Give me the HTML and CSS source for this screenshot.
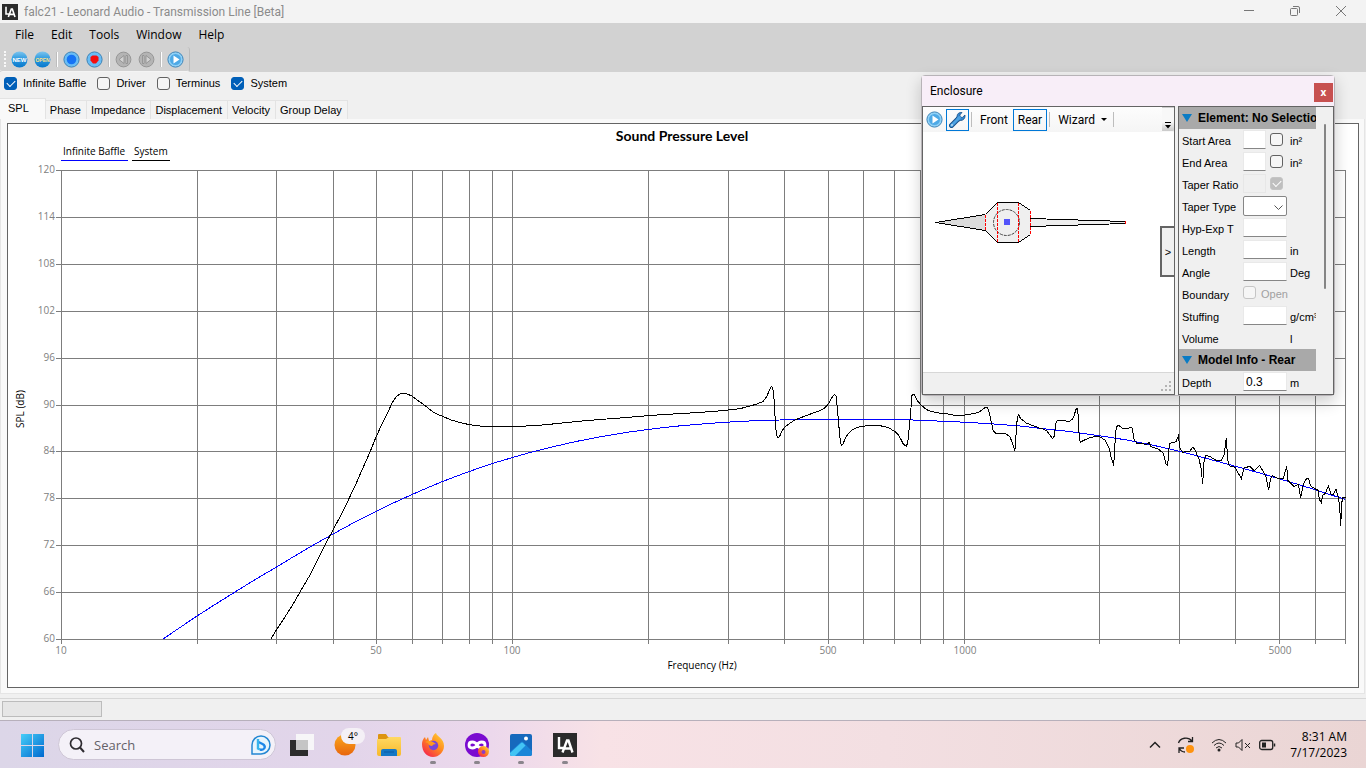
FILE: index.html
```html
<!DOCTYPE html>
<html lang="en">
<head>
    <meta charset="UTF-8">
    <meta name="viewport" content="width=device-width, initial-scale=1.0">
    <title>falc21 - Leonard Audio - Transmission Line [Beta]</title>
    <link rel="stylesheet" href="styles.css">
</head>
<body>
    <svg class="defs" width="0" height="0">
        <defs>
            <linearGradient id="gBall" x1="0" y1="0" x2="0" y2="1"><stop offset="0" stop-color="#7cc4ee"/><stop offset="0.45" stop-color="#2f9be0"/><stop offset="1" stop-color="#0878cc"/></linearGradient>
            <linearGradient id="gWin" x1="0" y1="0" x2="1" y2="1"><stop offset="0" stop-color="#45cdf8"/><stop offset="1" stop-color="#0069cf"/></linearGradient>
            <linearGradient id="gSun" x1="0" y1="0" x2="0" y2="1"><stop offset="0" stop-color="#fba81c"/><stop offset="1" stop-color="#e8650c"/></linearGradient>
            <linearGradient id="gFolder" x1="0" y1="0" x2="0" y2="1"><stop offset="0" stop-color="#ffd963"/><stop offset="1" stop-color="#f7b92c"/></linearGradient>
            <linearGradient id="gFox" x1="1" y1="0" x2="0.2" y2="1"><stop offset="0" stop-color="#ffdd3c"/><stop offset="0.5" stop-color="#ff8a1e"/><stop offset="1" stop-color="#f5224f"/></linearGradient>
            <symbol id="la" viewBox="0 0 24 24">
                <rect width="24" height="24" fill="#2b2b2b"/>
                <path d="M6 4v11h5M9.500 19.500L14 7.500h1.500L19.500 19.500M11.500 15.500h6" fill="none" stroke="#fff" stroke-width="2.400"/>
            </symbol>
            <symbol id="play" viewBox="0 0 17 17">
                <circle cx="8.500" cy="8.500" r="7.600" fill="#8fd0f6" stroke="#4186b8"/>
                <circle cx="8.500" cy="8.500" r="5.500" fill="#4ea9e6"/>
                <path d="M6.500 4.500v8l6-4z" fill="#fff"/>
            </symbol>
        </defs>
    </svg>

    <header class="titlebar">
        <svg class="app-icon" width="16" height="16"><use href="#la"/></svg>
        <h1>falc21 - Leonard Audio - Transmission Line [Beta]</h1>
        <div class="window-buttons">
            <button aria-label="Minimize"><svg width="12" height="12"><path d="M1 4.500h10"/></svg></button>
            <button aria-label="Restore"><svg width="12" height="12"><rect x="1.500" y="2.500" width="7" height="7" rx="1"/><path d="M4 0.500h5q1.500 0 1.500 1.500v5"/></svg></button>
            <button aria-label="Close"><svg width="12" height="12"><path d="M1 0l10 10M11 0L1 10"/></svg></button>
        </div>
    </header>

    <nav class="menu">
        <button>File</button>
        <button>Edit</button>
        <button>Tools</button>
        <button>Window</button>
        <button>Help</button>
    </nav>

    <div class="toolbar-row">
        <div class="toolbar">
            <span class="grip"></span>
            <button aria-label="New"><svg width="17" height="17"><circle cx="8.500" cy="8.500" r="8" fill="url(#gBall)"/><text x="8.500" y="11" class="ball-text">NEW</text></svg></button>
            <button aria-label="Open"><svg width="17" height="17"><circle cx="8.500" cy="8.500" r="8" fill="url(#gBall)"/><text x="8.500" y="11" class="ball-text gold">OPEN</text></svg></button>
            <span class="sep"></span>
            <button aria-label="Driver"><svg width="17" height="17"><circle cx="8.500" cy="8.500" r="7.600" fill="#69bdf5" stroke="#3f83b5"/><circle cx="8.500" cy="8.500" r="4.800" fill="#1673f5"/></svg></button>
            <button aria-label="Record"><svg width="17" height="17"><circle cx="8.500" cy="8.500" r="7.600" fill="#69bdf5" stroke="#3f83b5"/><path d="M4.500 6l2-1.500h4l2 1.500v3.500l-2.500 3h-3l-2.500-3z" fill="#f50d0d"/></svg></button>
            <span class="sep"></span>
            <button aria-label="Step back"><svg width="17" height="17"><circle cx="8.500" cy="8.500" r="7.400" fill="#b4b4b4" stroke="#979797"/><path d="M9 4.500v8l-5-4zM11 4.500h1.500v8H11z" fill="#d2d2d2" stroke="#8b8b8b" stroke-width="0.800"/></svg></button>
            <button aria-label="Step forward"><svg width="17" height="17"><circle cx="8.500" cy="8.500" r="7.400" fill="#b4b4b4" stroke="#979797"/><path d="M8 4.500v8l5-4zM4.500 4.500H6v8H4.500z" fill="#d2d2d2" stroke="#8b8b8b" stroke-width="0.800"/></svg></button>
            <span class="sep"></span>
            <button aria-label="Run"><svg width="17" height="17"><use href="#play"/></svg></button>
        </div>
    </div>

    <div class="checks">
        <label><input type="checkbox" checked>Infinite Baffle</label>
        <label><input type="checkbox">Driver</label>
        <label><input type="checkbox">Terminus</label>
        <label><input type="checkbox" checked>System</label>
    </div>

    <div class="tabs">
        <button class="active">SPL</button>
        <button>Phase</button>
        <button>Impedance</button>
        <button>Displacement</button>
        <button>Velocity</button>
        <button>Group Delay</button>
    </div>

    <main class="tab-page">
        <div class="chart">
            <svg viewBox="8 124 1350 563">
                <path class="grid" d="M56 170.500H1346M56 217.500H1346M56 264.500H1346M56 311.500H1346M56 358.500H1346M56 405.500H1346M56 451.500H1346M56 498.500H1346M56 545.500H1346M56 592.500H1346M56 639.500H1346"/>
                <path class="grid" d="M61.500 170V644M197.500 170V644M276.500 170V644M333.500 170V644M376.500 170V644M412.500 170V644M442.500 170V644M469.500 170V644M492.500 170V644M512.500 170V644M648.500 170V644M728.500 170V644M784.500 170V644M828.500 170V644M863.500 170V644M894.500 170V644M920.500 170V644M943.500 170V644M964.500 170V644M1099.500 170V644M1179.500 170V644M1235.500 170V644M1279.500 170V644M1315.500 170V644M1345.500 170V644"/>
                <polyline class="line blue" points="163,639 180,627.500 197,616 215,604.500 235,592 255,579.700 276,567.300 293,557 310,547 333,534 355,522 376,511.500 394,502.700 412,494.500 427,488 442,481.700 461,474.500 480,467.700 496,462.400 512,457.700 530,452.500 550,447.500 575,441.700 600,436.800 625,432.600 650,429.200 675,426.300 700,424.200 720,422.600 740,421.400 760,420.500 780,420 805,419.600 830,419.400 865,419.400 905,419.700 930,420.700 960,422 990,423.700 1020,426 1040,428.300 1070,431.600 1098,435.500 1125,439.700 1150,444.500 1180,451.400 1208,458.800 1235,466.200 1258,472.500 1280,479 1300,485 1315,489.700 1330,494.600 1345,499.300"/>
                <polyline class="line" points="271,639 277,629 283,620 292,606 300,592 310,575 318,559 325,545 333,530 341,515 345,507 355,486 362,470 370,452 376,437 382,424 388,412 392,403 396,397 400,394 403,393 407,394 412,396 417,400 423,404 428,408 433,412 438,414.500 443,416.500 451,420 460,422.500 470,424.800 480,426 495,426.500 515,426.500 530,425.800 545,424.800 562,423 580,421.200 600,419.500 620,418 640,416.300 660,414.800 680,413.600 700,412.400 715,411.300 728,410 740,408.700 750,406 757,404 763,401.500 767,396 769,391 771.300,386.700 772.700,387.500 773.500,394 774.300,402 775,416 776,430 777.300,437.500 779.300,437 782,431 785,427 790,423 795,420 800,418 805,416 812,413.500 820,410.700 824,408.500 827,405.700 829,403 831,399 833,396 834.700,394.500 836,396 837.300,408 838.500,422 840,438 841.300,445.300 842.700,444.700 846,436.700 849,433 852,430 857,427.500 862,426.300 872,425.300 879,425.500 885,426.700 890,428.500 895,431.700 898,434.500 900,437.700 903.300,444 906.300,446.300 907.700,443 910,420 912,395.300 914,394.300 917.300,400.700 921.700,405.700 926.700,409.700 931,411.300 936.700,412.700 948.300,414 953,415 958.300,415.300 965,415 970,414.300 975,413.300 979.300,412 982,410 985,407.700 987.700,407.700 989.300,413.300 991.300,422 993.300,431 996,433.300 1005,433.300 1010,436.700 1012.700,444 1014.700,450.700 1015.300,447 1016.700,423.300 1018.300,414.300 1020.700,418.700 1026.700,423.300 1034,426 1040,428.300 1043,429 1046.700,430.700 1052.700,438.700 1054.300,436 1056,422.700 1057.300,420.300 1069.300,421.300 1072.300,419.300 1074,416 1076,409.300 1077.500,408.300 1078.300,416.700 1079.300,439.300 1080.300,442.300 1085,439.700 1090,437.700 1098.300,436 1105,440 1109.300,448.300 1111,456.700 1113.700,465.700 1115,443.300 1116.300,426.700 1118.700,425.300 1122.700,428.700 1127.300,428.700 1130,427.300 1132.300,428.300 1134,439.300 1136.700,443.300 1146.700,444.300 1149.300,442.300 1150.700,446.700 1158.300,449 1163.300,453.300 1166,464.300 1167.700,465.700 1169.300,444 1171.700,442.700 1176,441.700 1178.300,436 1180,448.300 1182.700,452.300 1190,451 1193,447 1195.300,450.700 1199.300,460 1201,468.300 1202.700,483.700 1204,461.700 1205.700,455.300 1210.700,457 1216.700,460.700 1221.700,460 1224,455 1226.300,438.300 1227.700,460 1229.300,465.700 1235,467.300 1241.300,478.700 1244,468 1250,466.300 1254.300,470.700 1259.700,465.300 1262.300,470 1266,476.700 1268.700,490.300 1270.700,478.300 1272.300,475.700 1277.300,478 1283.300,478.700 1286.700,466.300 1288,480.700 1294,486.700 1298.300,484.300 1300.700,497.700 1303.300,484.300 1306.700,478.300 1308.700,479 1310.700,486 1316,489.300 1318,490.300 1319.300,499.300 1321.300,502.300 1322.700,495.300 1325.300,493.300 1328.300,486.300 1331,494 1333.300,494 1336,489 1338.300,497.300 1339.700,506.700 1340.700,525.700 1341.700,503.300 1342.700,497.700 1345.500,497.300"/>
                <text class="chart-title" x="682" y="141">Sound Pressure Level</text>
                <text class="legend" x="63" y="155">Infinite Baffle</text>
                <text class="legend" x="134" y="155">System</text>
                <path class="line blue" d="M61 160.500H128"/>
                <path class="line" d="M132 160.500H170"/>
                <g class="y-labels">
                    <text x="55" y="173">120</text>
                    <text x="55" y="220">114</text>
                    <text x="55" y="267">108</text>
                    <text x="55" y="314">102</text>
                    <text x="55" y="361">96</text>
                    <text x="55" y="408">90</text>
                    <text x="55" y="454">84</text>
                    <text x="55" y="501">78</text>
                    <text x="55" y="548">72</text>
                    <text x="55" y="595">66</text>
                    <text x="55" y="642">60</text>
                </g>
                <g class="x-labels">
                    <text x="61" y="654">10</text>
                    <text x="376" y="654">50</text>
                    <text x="512" y="654">100</text>
                    <text x="828" y="654">500</text>
                    <text x="965" y="654">1000</text>
                    <text x="1280" y="654">5000</text>
                </g>
                <text class="axis" x="702" y="669">Frequency (Hz)</text>
                <text class="axis" transform="translate(24 409) rotate(-90)">SPL (dB)</text>
            </svg>
        </div>
    </main>

    <footer class="status"><span class="progress"></span></footer>

    <section class="enclosure">
        <header>
            <h2>Enclosure</h2>
            <button aria-label="Close enclosure">x</button>
        </header>
        <div class="panes">
            <div class="left-pane">
                <div class="enc-toolbar">
                    <button class="icon" aria-label="Run model"><svg width="17" height="17"><use href="#play"/></svg></button>
                    <button class="icon pressed" aria-label="Settings"><svg width="17" height="17"><path d="M2.500 14.500l7-7" stroke="#174f88" stroke-width="5" stroke-linecap="round"/><path d="M8 5.500C8 2.500 10.500 1 13 1.500L10.800 4l.5 2 2 .5L16 4c.5 3-1.500 5.500-4.500 5.500L9.500 10 7 7.500z" fill="#3588d0" stroke="#174f88" stroke-width="0.800"/><path d="M2.500 14.500l8-8" stroke="#4da3e3" stroke-width="3" stroke-linecap="round"/><circle cx="3" cy="14" r="0.800" fill="#fff"/></svg></button>
                    <span class="enc-sep"></span>
                    <button>Front</button>
                    <button class="pressed">Rear</button>
                    <span class="enc-sep"></span>
                    <button class="wizard">Wizard<svg width="6" height="3"><path d="M0 0h6L3 3z"/></svg></button>
                    <span class="enc-sep"></span>
                    <button class="overflow" aria-label="More"><svg width="6" height="7"><path d="M0 0h6v1H0zM0 3h6L3 6.500z"/></svg></button>
                </div>
                <div class="canvas">
                    <svg viewBox="923 132 251 240">
                        <path d="M935.500 222.500L985.500 214.500V230.500z" fill="#dcdcdc"/>
                        <path d="M985.500 214.500L997.500 202.500H1018.500L1030.500 210.500V234.500L1018.500 242.500H997.500L985.500 230.500z" fill="#efefef"/>
                        <path d="M1030.500 218.500L1125.500 221.500V223.500L1030.500 226.500z" fill="#eee"/>
                        <path class="outline" d="M985.500 214.500L935.500 222.500L985.500 230.500L997.500 242.500H1018.500L1030.500 234.500M985.500 214.500L997.500 202.500H1018.500L1030.500 210.500M1030.500 218.500L1125.500 221.500M1030.500 226.500L1125.500 223.500"/>
                        <circle cx="1006.500" cy="222.500" r="13" class="speaker"/>
                        <path class="dashed" d="M985.500 215V230M997.500 203V242M1018.500 203V242M1030.500 211V234"/>
                        <path d="M1125.500 221V224" stroke="#f00"/>
                        <rect x="1004" y="219" width="6" height="6" fill="#5454fa"/>
                    </svg>
                    <button class="collapse">&gt;</button>
                </div>
                <div class="enc-status"><svg width="11" height="11"><path d="M8 0h2v2H8zM8 4h2v2H8zM4 4h2v2H4zM8 8h2v2H8zM4 8h2v2H4zM0 8h2v2H0z" fill="#b4b4b4"/></svg></div>
            </div>
            <div class="right-pane">
                <div class="props">
                    <h3><svg width="10" height="8"><path d="M0 0h10L5 8z"/></svg>Element: No Selection</h3>
                    <div class="row"><label for="start">Start Area</label><span class="field"><input type="text" id="start" class="short"><input type="checkbox" aria-label="Lock start area"></span><span>in²</span></div>
                    <div class="row"><label for="end">End Area</label><span class="field"><input type="text" id="end" class="short"><input type="checkbox" aria-label="Lock end area"></span><span>in²</span></div>
                    <div class="row"><label for="ratio">Taper Ratio</label><span class="field"><input type="text" id="ratio" class="short" disabled><input type="checkbox" aria-label="Lock taper ratio" checked disabled></span></div>
                    <div class="row"><label for="type">Taper Type</label><span class="field select"><select id="type"><option></option></select><svg width="9" height="5"><path d="M0.500 0.500l4 4 4-4"/></svg></span></div>
                    <div class="row"><label for="hyp">Hyp-Exp T</label><input type="text" id="hyp"></div>
                    <div class="row"><label for="len">Length</label><input type="text" id="len"><span>in</span></div>
                    <div class="row"><label for="angle">Angle</label><input type="text" id="angle"><span>Deg</span></div>
                    <div class="row"><span>Boundary</span><label class="open"><input type="checkbox" disabled>Open</label></div>
                    <div class="row"><label for="stuff">Stuffing</label><input type="text" id="stuff"><span>g/cm³</span></div>
                    <div class="row"><span>Volume</span><span></span><span>l</span></div>
                    <h3><svg width="10" height="8"><path d="M0 0h10L5 8z"/></svg>Model Info - Rear</h3>
                    <div class="row"><label for="depth">Depth</label><input type="text" id="depth" value="0.3"><span>m</span></div>
                </div>
                <div class="scroll"><span></span></div>
            </div>
        </div>
    </section>

    <footer class="taskbar">
        <button class="task" aria-label="Start"><svg width="24" height="24"><path d="M1 1h11v11H1zM13 1h11v11H13zM1 13h11v11H1zM13 13h11v11H13z" fill="url(#gWin)"/></svg></button>
        <div class="search">
            <svg width="16" height="16"><circle cx="7" cy="6.500" r="5.500" fill="none" stroke="#2d2b30" stroke-width="1.700"/><path d="M11 10.500l4 4.500" stroke="#2d2b30" stroke-width="2"/></svg>
            <input type="text" placeholder="Search" aria-label="Search">
            <svg width="22" height="22"><path d="M2 20V11a9 9 0 1 1 9 9z" fill="#e8f5fd" stroke="#2487d2" stroke-width="1.500"/><path d="M8.500 8l4 2q3 1.500 2 4-1.500 2.500-4.500 1.500" fill="none" stroke="#1d86e8" stroke-width="2.400"/><path d="M8 5v9.500l2 1" fill="none" stroke="#37b4ec" stroke-width="2.400"/></svg>
        </div>
        <div class="tasks">
            <button class="task" aria-label="Task view"><svg width="26" height="26"><rect x="2" y="8" width="18" height="16" fill="#2c2c2c"/><rect x="8" y="2" width="18" height="16" fill="#fafafa" opacity="0.900"/><rect x="8" y="8" width="12" height="10" fill="#c5c5c5"/></svg></button>
            <button class="task" aria-label="Weather"><svg width="30" height="28"><circle cx="15" cy="14" r="10.500" fill="url(#gSun)"/></svg><span class="badge">4°</span></button>
            <button class="task" aria-label="File Explorer"><svg width="26" height="26"><path d="M2 3q0-1 1-1h7l2 3h11v6H2z" fill="#dd9410"/><path d="M1 8q0-1 1-1h8l3-2h11q1 0 1 1v16q0 2-2 2H3q-2 0-2-2z" fill="url(#gFolder)"/><path d="M5 24v-5q0-2 2-2h12q2 0 2 2v5z" fill="#1478c6"/><path d="M8 20h10" stroke="#0a5ba3"/></svg></button>
            <button class="task running" aria-label="Firefox"><svg width="26" height="26" viewBox="0 0 26 26"><path d="M2 12c0-3 1-5 3-7l1 3 2-3 1 4 3-1c0-3 2-6 4-7 1 4 8 5 8 13 0 6-5 11-11 11S2 20 2 12z" fill="url(#gFox)"/><circle cx="13.500" cy="13.500" r="4.700" fill="#7646d8"/><path d="M5 10q4-2 8 0l3 2q-3 0-4 2-3 0-4-3z" fill="#ff9920"/></svg></button>
            <button class="task running" aria-label="Private browsing"><svg width="26" height="26"><circle cx="13" cy="13" r="12" fill="#7a0bd0"/><path d="M13 13c-2-4-8-4-8 0s6 4 8 0 8-4 8 0-6 4-8 0" fill="none" stroke="#fff" stroke-width="2.800"/><circle cx="19.500" cy="19.500" r="5.500" fill="url(#gFox)"/><circle cx="19.500" cy="20" r="2" fill="#8c3fc5"/></svg></button>
            <button class="task running" aria-label="Photos"><svg width="24" height="24"><rect x="1" y="1" width="22" height="22" rx="2" fill="#1669bd"/><path d="M1 19L12 9q1-1 2 0l9 9v3q0 2-2 2H3q-2 0-2-2z" fill="#1a86d8"/><path d="M1 20L12 10q1-1 2 0l2.500 2.500L6 23H3q-2 0-2-2z" fill="#43c4f4"/><circle cx="17" cy="5.500" r="2" fill="#fff"/></svg></button>
            <button class="task running" aria-label="Leonard Audio"><svg width="24" height="24"><use href="#la"/></svg></button>
        </div>
        <div class="tray">
            <svg width="12" height="8"><path d="M1 6.500l5-5 5 5" stroke-width="1.500"/></svg>
            <svg width="18" height="18"><path d="M1.500 7C3 2 11 0 15 5M15.500 1v4.500H11M2 17v-5h5M2 12q2 4 6 4" stroke-width="1.300"/><circle cx="13" cy="13" r="4" fill="#ff930f" stroke="none"/></svg>
            <svg width="16" height="14"><path d="M1 5q7-7 14 0M3 7.500q5-5 10 0M5 10q3-3 6 0"/><circle cx="8" cy="12" r="1.500" fill="#222" stroke="none"/></svg>
            <svg width="16" height="14"><path d="M1 5h2.500L7 1.500v11L3.500 9H1zM10 5l5 5M15 5l-5 5"/></svg>
            <svg width="17" height="12"><rect x="0.700" y="1.500" width="13" height="9" rx="2" stroke-width="1.300"/><rect x="3" y="3.500" width="4" height="5" fill="#222" stroke="none"/><path d="M15.500 4.500v3" stroke-width="1.500"/></svg>
            <time>8:31 AM<br>7/17/2023</time>
        </div>
    </footer>
</body>
</html>
```

FILE: styles.css
```css
* {
    margin: 0;
    padding: 0;
    box-sizing: border-box;
}

body {
    display: flex;
    flex-direction: column;
    min-height: 100vh;
    position: relative;
    background-color: #f0f0f0;
    color: #000;
    font: 11px/14px "Liberation Sans", Arial, sans-serif;
}

button {
    border: none;
    background: none;
    color: inherit;
    font: inherit;
    white-space: nowrap;
}

svg {
    display: block;
    flex: none;
}

.defs {
    position: absolute;
}

/* title bar and menu */
.titlebar {
    display: flex;
    align-items: center;
    height: 23px;
    padding-left: 2px;
    gap: 6px;
    background-color: #f3f3f3;
}

.titlebar h1 {
    flex: 1;
    color: #8b8b8b;
    font: 12px/18px Roboto, sans-serif;
}

.window-buttons {
    display: flex;
}

.window-buttons button {
    display: flex;
    justify-content: center;
    width: 46px;
    padding-right: 4px;
}

.window-buttons svg {
    fill: none;
    stroke: #777;
}

.menu {
    display: flex;
    height: 24px;
    padding-left: 7px;
    background-color: #d2d2d2;
    font: 12px/24px "Open Sans", sans-serif;
}

.menu button {
    padding: 0 9px 0 8px;
}

/* toolbar */
.toolbar-row {
    height: 25px;
    background-color: #d2d2d2;
}

.toolbar {
    display: flex;
    align-items: center;
    width: 190px;
    height: 25px;
    padding-left: 4px;
    border-right: 1px solid #bbb;
    border-bottom: 1px solid #f4f4f4;
    border-radius: 3px;
}

.toolbar button {
    width: 23px;
    padding-left: 3px;
}

.grip {
    width: 2px;
    height: 16px;
    margin-right: 2px;
    border-left: 2px dotted #f8f8f8;
}

.sep {
    width: 2px;
    height: 15px;
    margin: 0 2px;
    border-left: 1px solid #bdbdbd;
    border-right: 1px solid #fff;
}

.ball-text {
    fill: #fff;
    font: bold 6px "Liberation Sans", sans-serif;
    text-anchor: middle;
}

.ball-text.gold {
    fill: #ffe08a;
    font-size: 5px;
}

/* check boxes */
input[type=checkbox] {
    appearance: none;
    flex: none;
    width: 13px;
    height: 13px;
    border: 1px solid #626262;
    border-radius: 3px;
    background-color: #f6f6f6;
}

input[type=checkbox]:checked {
    border-color: #005fb8;
    background-color: #005fb8;
}

input[type=checkbox]:checked::after {
    content: "";
    display: block;
    width: 7px;
    height: 4px;
    margin: 2px;
    border-left: 1px solid #fff;
    border-bottom: 1px solid #fff;
    transform: rotate(-45deg);
}

input[type=checkbox]:disabled {
    border-color: #c5c5c5;
}

input[type=checkbox]:checked:disabled {
    background-color: #bfbfbf;
}

.checks {
    display: flex;
    gap: 11px;
    height: 26px;
    padding: 4px;
}

.checks label {
    display: flex;
    align-items: center;
    height: 14px;
    gap: 6px;
}

/* tabs */
.tabs {
    display: flex;
    align-items: flex-end;
    height: 21px;
}

.tabs button {
    height: 19px;
    padding: 0 5px 0 4px;
    border: 1px solid #e3e3e3;
    border-bottom: none;
    border-left: none;
    background-color: #f3f3f3;
}

.tabs .active {
    height: 21px;
    padding: 0 16px 2px 8px;
    background-color: #f9f9f9;
}

.tab-page {
    flex: 1;
    display: flex;
    margin-right: 1px;
    padding: 4px 5px 5px 6px;
    border: 1px solid #e5e5e5;
    border-top: none;
    background-color: #f9f9f9;
}

.chart {
    flex: 1;
    border: 1px solid #646464;
    background-color: #fff;
}

.chart svg {
    width: 100%;
}

.grid {
    stroke: #7d7d7d;
    shape-rendering: crispEdges;
}

.line {
    fill: none;
    stroke: #000;
    shape-rendering: crispEdges;
}

.line.blue {
    stroke: #00f;
}

.chart text {
    font: 10px "Open Sans", sans-serif;
}

.chart .chart-title {
    font: bold 14px Lato, sans-serif;
    text-anchor: middle;
}

.y-labels {
    fill: #808080;
    text-anchor: end;
}

.x-labels {
    fill: #808080;
    text-anchor: middle;
}

.axis {
    text-anchor: middle;
}

.status {
    height: 22px;
    margin-top: 4px;
    padding: 2px;
    border-top: 1px solid #d7d7d7;
}

.progress {
    display: block;
    width: 100px;
    height: 16px;
    border: 1px solid #bcbcbc;
    background-color: #e6e6e6;
}

/* enclosure window, floats over the chart */
.enclosure {
    position: absolute;
    top: 75px;
    right: 31px;
    width: 414px;
    border: 1px solid #b7b3b7;
    border-radius: 4px;
    background-color: #f0f0f0;
    box-shadow: 0 6px 16px #0003;
}

.enclosure header {
    display: flex;
    justify-content: space-between;
    align-items: center;
    height: 30px;
    padding-left: 8px;
    background-color: #f8eef8;
}

.enclosure h2 {
    font: 12px/18px Roboto, sans-serif;
}

.enclosure header button {
    width: 19px;
    height: 19px;
    margin: 2px 1px 0 0;
    background-color: #c75050;
    color: #fff;
    font: bold 10px/16px "Open Sans", sans-serif;
}

.panes {
    display: flex;
    gap: 3px;
    height: 289px;
}

.left-pane {
    flex: 1;
    display: flex;
    flex-direction: column;
    border: 1px solid #646464;
    background-color: #fff;
}

.enc-toolbar {
    display: flex;
    align-items: center;
    height: 25px;
    padding-left: 3px;
    background: linear-gradient(#fdfdfd, #f5f5f5);
    font: 12px/18px Roboto, sans-serif;
}

.enc-toolbar button {
    height: 22px;
    padding: 0 4px;
    border: 1px solid transparent;
}

.enc-toolbar .icon {
    padding: 0 2px;
}

.enc-toolbar .icon:first-child {
    padding: 0 2px 0 0;
    border-left: none;
}

.enc-toolbar .pressed {
    border-color: #0078d7;
}

.enc-sep {
    width: 1px;
    height: 15px;
    margin: 0 3px 0 2px;
    background-color: #bdbdbd;
}

.enc-toolbar .wizard {
    display: flex;
    align-items: center;
    gap: 6px;
    padding: 0 3px 0 4px;
}

.enc-toolbar .overflow {
    align-self: stretch;
    display: flex;
    align-items: flex-end;
    width: 12px;
    height: 25px;
    margin-left: auto;
    padding: 0 2px 2px;
    border-radius: 0 0 3px 0;
    background: linear-gradient(#f8f8f8 60%, #c9c9c9);
}

.canvas {
    flex: 1;
    position: relative;
}

.canvas > svg {
    width: 100%;
}

.outline {
    fill: none;
    stroke: #000;
    shape-rendering: crispEdges;
}

.dashed {
    stroke: #f00;
    stroke-dasharray: 3 1;
    shape-rendering: crispEdges;
}

.speaker {
    fill: none;
    stroke: #444;
    stroke-dasharray: 3 1;
}

.collapse {
    position: absolute;
    top: 94px;
    right: 0;
    width: 14px;
    height: 51px;
    border: 2px solid #646464;
    border-right: none;
    background-color: #f0f0f0;
}

.enc-status {
    display: flex;
    justify-content: flex-end;
    align-items: flex-end;
    height: 22px;
    padding: 2px;
    border-top: 1px solid #d7d7d7;
    background-color: #f0f0f0;
}

.right-pane {
    display: flex;
    width: 156px;
    border: 1px solid #646464;
}

.props {
    flex: 1;
    overflow: hidden;
}

.props h3 {
    display: flex;
    align-items: center;
    height: 22px;
    padding-left: 3px;
    gap: 6px;
    background-color: #a9a9a9;
    font-size: 12px;
    white-space: nowrap;
}

.props h3 svg {
    fill: #0a7bc4;
}

.row {
    display: grid;
    grid-template-columns: 58px 44px 40px;
    column-gap: 3px;
    align-items: center;
    height: 22px;
    padding: 1px 0 0 3px;
    white-space: nowrap;
}

.field {
    display: flex;
    align-items: center;
    gap: 4px;
}

.props input[type=text] {
    width: 100%;
    height: 19px;
    margin-bottom: 3px;
    padding: 0 2px;
    border: 1px solid #e9e9e9;
    border-bottom-color: #868686;
    background-color: #fff;
    font: 12px "Liberation Sans", sans-serif;
}

.props input.short {
    width: 23px;
}

.props input[type=text]:disabled {
    border-color: #e7e7e7;
    background-color: #f0f0f0;
}

.row input[type=checkbox] {
    margin-bottom: 3px;
}

.select {
    position: relative;
}

.select select {
    appearance: none;
    width: 100%;
    height: 20px;
    margin-bottom: 2px;
    border: 1px solid #868686;
    border-radius: 2px;
    background-color: #fff;
}

.select svg {
    position: absolute;
    right: 4px;
    fill: none;
    stroke: #555;
    pointer-events: none;
}

.open {
    display: flex;
    align-items: center;
    gap: 5px;
    padding-bottom: 2px;
    color: #a0a0a0;
}

.scroll {
    width: 17px;
    padding: 17px 7px 0 8px;
}

.scroll span {
    display: block;
    width: 2px;
    height: 165px;
    border-radius: 1px;
    background-color: #858585;
}

/* taskbar */
.taskbar {
    display: flex;
    align-items: center;
    height: 48px;
    padding-left: 10px;
    border-top: 1px solid #b7b0bb;
    background: linear-gradient(90deg, #dcd6e8, #e2d5ea 25%, #ecd8ec 36%, #f8e2e6 44%, #f3dfe2 65%, #ead5d4);
}

.task {
    position: relative;
    display: flex;
    justify-content: center;
    align-items: center;
    width: 44px;
    height: 46px;
}

.running::after {
    content: "";
    position: absolute;
    bottom: 4px;
    width: 6px;
    height: 3px;
    border-radius: 2px;
    background-color: #8a858c;
}

.badge {
    position: absolute;
    top: 6px;
    right: 2px;
    width: 24px;
    border-radius: 8px;
    background-color: #f4f0f6;
    font: 10px/16px "Open Sans", sans-serif;
}

.search {
    display: flex;
    align-items: center;
    width: 218px;
    height: 31px;
    margin: 0 3px 0 4px;
    padding: 0 3px 0 10px;
    gap: 9px;
    border: 1px solid #cec6d6;
    border-radius: 16px;
    background-color: #f4f1f8;
}

.search input {
    flex: 1;
    width: 50px;
    border: none;
    background: none;
    font: 13px/18px "Open Sans", sans-serif;
}

.search input::placeholder {
    color: #646168;
}

.tasks {
    display: flex;
}

.tray {
    display: flex;
    align-items: center;
    gap: 8px;
    margin-left: auto;
    padding-right: 19px;
}

.tray svg {
    fill: none;
    stroke: #222;
}

.tray svg:nth-child(-n+2) {
    margin-right: 8px;
}

.tray time {
    width: 63px;
    font: 12px/16px "Open Sans", sans-serif;
    text-align: right;
}
```
